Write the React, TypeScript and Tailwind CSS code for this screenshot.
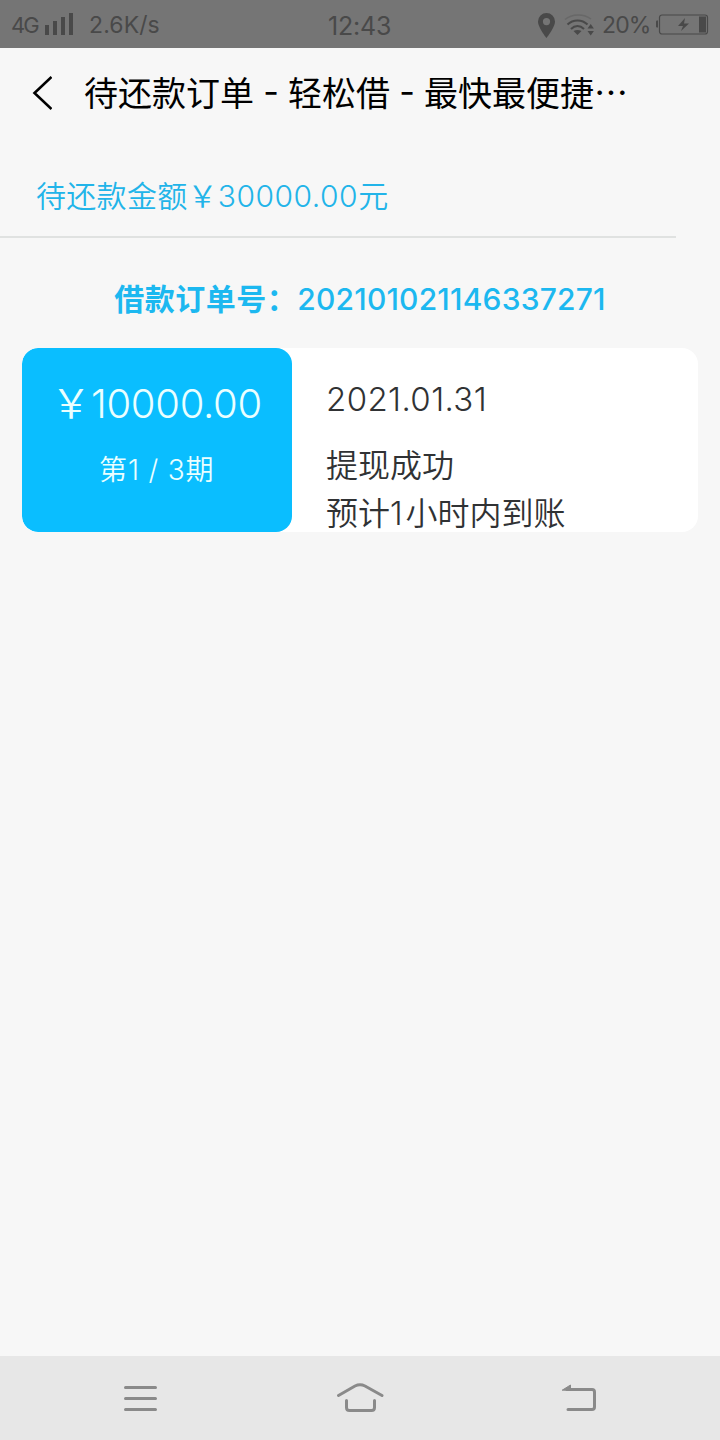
import type { ReactNode } from "react";

type Installment = {
  amount: string;
  period: string;
  date: string;
  status: string;
};

const installments: Installment[] = [{ amount: "10000.00", period: "1 / 3", date: "2021.01.31", status: "提现成功" }];

function StatusBar() {
  return (
    <header className="flex h-12 items-center bg-[#757575] text-[#494949]">
      <div className="flex w-[328px] items-center pl-[11px]">
        <span className="w-[34px] pt-px text-[22px] leading-[48px] tracking-[-2px]">4G</span>
        <svg width="28" height="22" viewBox="0 0 28 22" fill="currentColor" className="shrink-0">
          <path d="M0 12h4v10H0zM8 8h4v14H8zM16 4h4v18h-4zM24 0h4v22h-4z" />
        </svg>
        <span className="ml-4 pt-[2px] text-[23px] leading-[48px] tracking-[0.1px]">2.6K/s</span>
      </div>
      <span className="w-[210px] pt-1 text-[25px] leading-[48px] tracking-[-0.2px]">12:43</span>
      <svg width="17" height="25" viewBox="0 0 17 25" fill="currentColor" fillRule="evenodd" className="mt-[2px] shrink-0">
        <path d="M8.5 0A8.5 8.5 0 0 0 0 8.5C0 14.5 8.5 25 8.5 25S17 14.5 17 8.5A8.5 8.5 0 0 0 8.5 0ZM8.5 5a3.6 3.6 0 1 1 0 7.2a3.6 3.6 0 0 1 0-7.2Z" />
      </svg>
      <svg width="31" height="22" viewBox="0 0 31 22" fill="none" stroke="currentColor" strokeWidth="2" className="ml-[9px] mt-[1px] shrink-0">
        <path d="M1 5.5C8 -0.5 20 -0.5 27 5" stroke="#686868" strokeWidth="1.5" />
        <path d="M3.5 10.5C9 5 18 5 23.5 10.5" />
        <path d="M7 15C11 11 16 11 20 15" />
        <path d="M9.5 17C12 15.5 15 15.5 17.5 17L13.5 21Z" fill="currentColor" stroke="none" />
        <path d="M23.5 14.5 26.7 10l3.2 4.5ZM23.5 17h6.4L26.7 21.5Z" fill="currentColor" stroke="none" />
      </svg>
      <span className="ml-[7px] w-[54px] pt-[2px] text-[23px] leading-[48px] tracking-[-0.9px]">20%</span>
      <svg width="53" height="21" viewBox="0 0 53 21" fill="none" className="shrink-0">
        <path d="M2 6.5H1a1 1 0 0 0-1 1v5a1 1 0 0 0 1 1h1z" fill="currentColor" />
        <rect x="3.5" y="1" width="48" height="19" rx="2.5" stroke="currentColor" strokeWidth="1.2" />
        <path d="M43 2.5h7v16h-7z" fill="currentColor" />
        <path d="M29 4 22 12h5l-2 5 8-7.5h-5Z" fill="currentColor" />
      </svg>
    </header>
  );
}

function TitleBar() {
  return (
    <div className="flex h-[92px] text-black">
      <svg width="20" height="34" viewBox="0 0 20 34" fill="none" stroke="currentColor" strokeWidth="2.6" className="mt-7 ml-8">
        <path d="M19.5 1 2.5 17l17 16" />
      </svg>
      <h1 className="ml-8 text-[34px] leading-[88px] whitespace-nowrap">
        待还款订单
        <Dash />
        轻松借
        <Dash />
        最快最便捷<span className="font-['Noto_Sans_CJK_SC']">…</span>
      </h1>
    </div>
  );
}

function Dash() {
  return <span className="relative -top-[2px] inline-block w-[34px] text-center">-</span>;
}

function InstallmentCard({ item }: { item: Installment }) {
  return (
    <article className="flex h-[184px] overflow-hidden rounded-2xl bg-white">
      <div className="w-[270px] rounded-2xl bg-[#0abeff] text-[#eaffff]">
        <p className="flex pt-[26px] pl-[29px] text-[40px] leading-[60px] font-light whitespace-nowrap">
          <span className="font-[350]">￥</span>
          <span className="tracking-[-0.3px]">{item.amount}</span>
        </p>
        <p className="pt-[12px] pl-[77px] text-[28px] leading-[48px] font-[350] whitespace-nowrap">
          第<span className="ml-px font-light tracking-[0.8px]">{item.period}</span>期
        </p>
      </div>
      <div className="pl-[34px] text-[32px] leading-[48px] font-[350] whitespace-nowrap text-[#303234]">
        <p className="pt-[27px] text-[33px] tracking-[0.4px]">{item.date}</p>
        <p className="mt-[19px]">{item.status}</p>
        <p>
          预计<span className="mr-[3px]">1</span>小时内到账
        </p>
      </div>
    </article>
  );
}

function NavButton({ label, children }: { label: string; children: ReactNode }) {
  return (
    <button type="button" aria-label={label} className="flex h-full w-[220px] items-center justify-center pt-1">
      <svg width="50" height="36" viewBox="0 0 50 36" fill="none" stroke="currentColor" strokeWidth="3" strokeLinecap="round" strokeLinejoin="round">
        {children}
      </svg>
    </button>
  );
}

function NavBar() {
  return (
    <nav className="flex h-[84px] justify-center bg-[#e7e7e7] text-[#8a8a8a]">
      <NavButton label="菜单">
        <path d="M10.5 5.5h30M10.5 16.5h30M10.5 27.500h30" />
      </NavButton>
      <NavButton label="主页">
        <path d="M3.5 13.5 20 4q5-2.500 10 0l17 9.500" />
        <path d="M11.5 18.500v7q0 3 3 3h22q3 0 3-3v-7" />
      </NavButton>
      <NavButton label="返回">
        <path d="M12 7.500h25q2.500 0 2.500 2.500v15q0 2.500-2.500 2.500H13" />
        <path d="M7.500 8 15.500 3v5Z" fill="currentColor" strokeWidth="1" />
      </NavButton>
    </nav>
  );
}

export default function App() {
  return (
    <div className="flex h-[1440px] w-[720px] flex-col overflow-hidden bg-[#f7f7f7] font-['Inter','Noto_Sans_CJK_SC',sans-serif]">
      <StatusBar />
      <TitleBar />
      <main className="flex-1">
        <div className="h-[98px] w-[676px] border-b-2 border-[#e0e2e1] pt-8 pl-9 text-[30px] leading-[48px] font-[350] whitespace-nowrap text-[#22b4e9]">
          <span className="tracking-[0.3px]">待还款金额￥</span>
          <span className="font-light tracking-[0.5px]">30000.00</span>元
        </div>
        <h2 className="flex h-[110px] justify-center pt-[37px] text-[30px] leading-[48px] font-medium whitespace-nowrap text-[#1cb8f0]">
          <span className="font-bold tracking-[0.5px]">借款订单号：</span>
          <span className="tracking-[0.2px]">202101021146337271</span>
        </h2>
        <div className="px-[22px]">
          {installments.map((item) => (
            <InstallmentCard key={item.period} item={item} />
          ))}
        </div>
      </main>
      <NavBar />
    </div>
  );
}
